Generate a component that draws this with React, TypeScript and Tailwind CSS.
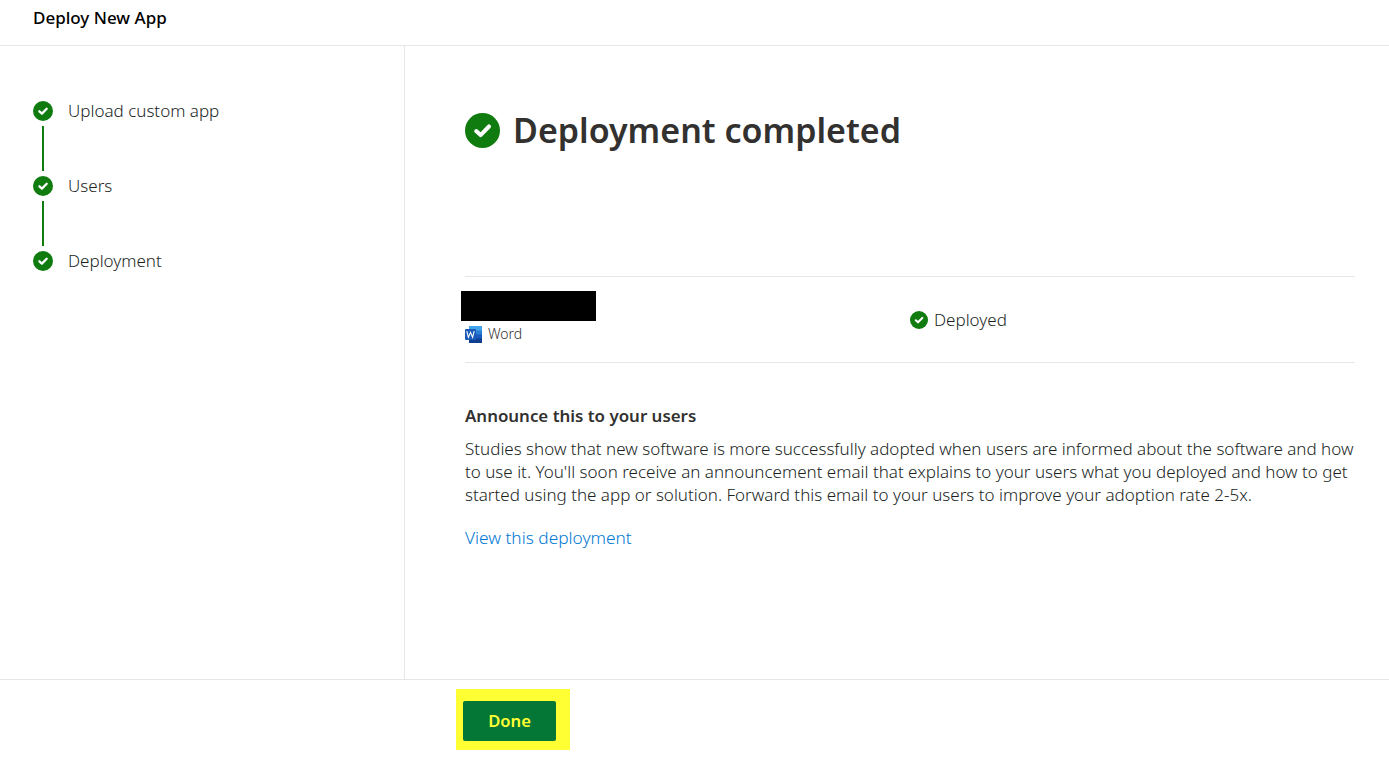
const font = "font-['Noto_Sans','Liberation_Sans',sans-serif]";

function CheckCircle({ size }: { size: number }) {
  return (
    <svg width={size} height={size} viewBox="0 0 20 20" className="shrink-0">
      <circle cx="10" cy="10" r="10" fill="#107c10" />
      <path d="M6.4 10.3l2.5 2.3 4.8-4.9" fill="none" stroke="#fff" strokeWidth="2.3" strokeLinecap="round" strokeLinejoin="round" />
    </svg>
  );
}

function WordIcon() {
  return (
    <svg width="17" height="17" viewBox="0 0 17 17" className="shrink-0">
      <rect x="4" y="0" width="13" height="5" fill="#41a5ee" />
      <rect x="4" y="4.5" width="13" height="4.5" fill="#2b7cd3" />
      <rect x="4" y="8.5" width="13" height="4.5" fill="#185abd" />
      <rect x="4" y="12.5" width="13" height="4.5" fill="#103f91" />
      <rect x="0" y="3" width="11" height="11" rx="1" fill="#1a5bb8" />
      <path d="M1.8 5.2l1.6 6.2 2.1-5 2.1 5 1.6-6.2" fill="none" stroke="#fff" strokeWidth="1.1" />
    </svg>
  );
}

const steps = ["Upload custom app", "Users", "Deployment"];

export default function App() {
  return (
    <div className={`${font} flex h-[758px] w-[1389px] flex-col overflow-hidden bg-white text-[#323130]`}>
      <header className="flex h-[46px] shrink-0 items-start border-b border-[#e6e6e6] pl-[33px] pt-[6px]">
        <h1 className="text-[17px] font-medium leading-[24px] text-black">Deploy New App</h1>
      </header>

      <div className="flex min-h-0 flex-1">
        <aside className="w-[405px] shrink-0 border-r border-[#e6e6e6] pl-[33px] pt-[55px]">
          {steps.map((step, i) => (
            <div key={step}>
              <div className="flex h-[20px] items-center gap-[15px]">
                <CheckCircle size={20} />
                <span className="text-[17px] font-light leading-[20px] text-[#201f1e]">{step}</span>
              </div>
              {i < steps.length - 1 && <div className="my-[5px] ml-[9px] h-[45px] w-[2px] bg-[#107c10]" />}
            </div>
          ))}
        </aside>

        <main className="flex-1 pl-[60px] pr-[34px] pt-[61px]">
          <div className="flex h-[46px] items-center gap-[13px]">
            <CheckCircle size={35} />
            <h2 className="text-[34px] font-semibold leading-[46px]">Deployment completed</h2>
          </div>

          <div className="mt-[123px] flex h-[87px] items-center border-y border-[#e6e6e6]">
            <div className="mb-[4px] w-[445px]">
              <div className="-ml-[4px] h-[30px] w-[135px] bg-black" />
              <div className="mt-[3px] flex items-center gap-[6px] text-[14px] font-light leading-[20px] text-[#323130]">
                <WordIcon />
                <span>Word</span>
              </div>
            </div>
            <div className="flex items-center gap-[6px] pt-[1px] text-[17px] font-light text-[#201f1e]">
              <CheckCircle size={18} />
              <span>Deployed</span>
            </div>
          </div>

          <h3 className="mt-[41px] text-[16.9px] font-semibold leading-[24px]">Announce this to your users</h3>
          <p className="mt-[9px] text-[17px] font-light leading-[23px] text-[#201f1e]">
            Studies show that new software is more successfully adopted when users are informed about the software and how
            to use it. You'll soon receive an announcement email that explains to your users what you deployed and how to get
            started using the app or solution. Forward this email to your users to improve your adoption rate 2-5x.
          </p>
          <a className="mt-[20px] block text-[17.3px] font-light leading-[24px] text-[#0078d4]">View this deployment</a>
        </main>
      </div>

      <footer className="h-[79px] shrink-0 border-t border-[#e6e6e6] pl-[456px] pt-[9px]">
        <div className="inline-block bg-[#ffff33] pb-[9px] pl-[7px] pr-[14px] pt-[12px]">
          <button className="block h-[40px] w-[93px] rounded-[2px] bg-[#047736] pt-[1px] text-[16.6px] font-semibold text-[#ffff33]">
            Done
          </button>
        </div>
      </footer>
    </div>
  );
}
